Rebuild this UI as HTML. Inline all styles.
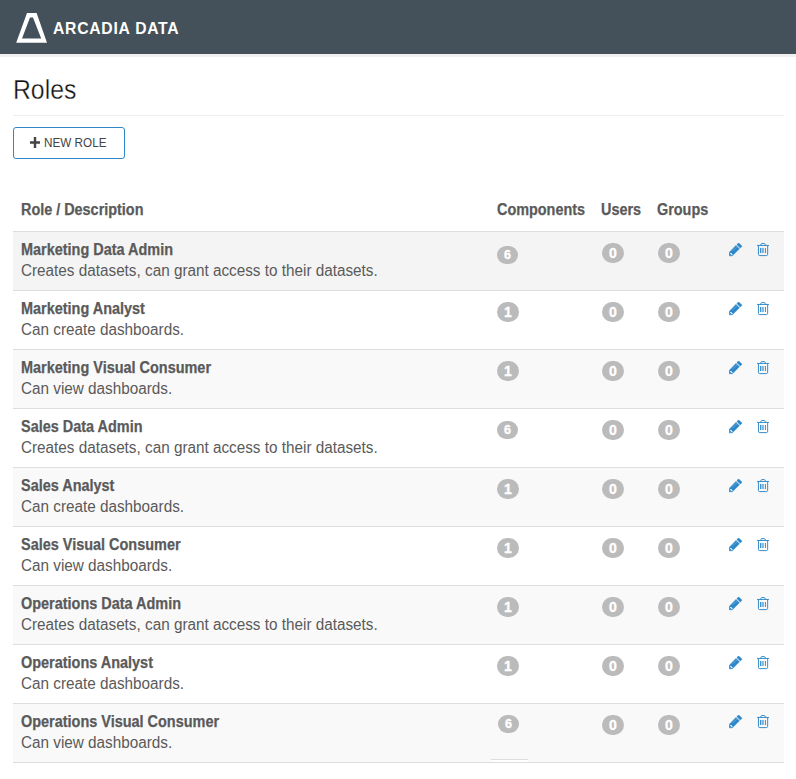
<!DOCTYPE html>
<html><head><meta charset="utf-8">
<style>
*{box-sizing:border-box;}
html,body{margin:0;padding:0;background:#fff;width:796px;height:779px;overflow:hidden;}
body{font-family:"Liberation Sans",sans-serif;color:#5a5a5a;position:relative;}
.hdr{position:absolute;left:0;top:0;width:796px;height:54px;background:#45515a;}
.stripe{position:absolute;left:0;top:54px;width:796px;height:3px;background:#f0f0f0;}
.logo{position:absolute;left:0;top:0;}
.brand{position:absolute;left:53px;top:17px;font-weight:bold;font-size:16.5px;color:#fff;letter-spacing:0.8px;line-height:22px;white-space:nowrap;transform:scaleX(0.95);transform-origin:0 0;}
h1{position:absolute;left:13px;top:72px;margin:0;font-weight:normal;font-size:27.5px;line-height:36px;color:#111;white-space:nowrap;transform:scaleX(0.9);transform-origin:0 0;-webkit-text-stroke:0.35px #fff;}
.hr{position:absolute;left:13px;top:115px;width:771px;height:1px;background:#eee;}
.btn{position:absolute;left:13px;top:127px;width:112px;height:32px;border:1px solid #2f87c7;border-radius:3px;}
.btn .plus{position:absolute;left:16px;top:9px;}
.btn .txt{position:absolute;left:30px;top:7px;font-size:12.8px;line-height:16px;color:#444;white-space:nowrap;transform:scaleX(0.915);transform-origin:0 0;}
.th{position:absolute;top:200px;font-weight:bold;font-size:16px;line-height:20px;color:#5a5a5a;white-space:nowrap;transform:scaleX(0.9);transform-origin:0 0;-webkit-text-stroke:0.25px #5a5a5a;}
.row{position:absolute;left:13px;width:771px;height:59px;border-top:1px solid #ddd;}
.row.odd{background:#f9f9f9;}
.row.hov{background:#f4f4f4;}
.bottom{position:absolute;left:13px;top:762px;width:771px;height:1px;background:#ddd;}
.t{position:absolute;left:8px;top:8px;font-weight:bold;font-size:16px;line-height:20px;color:#5a5a5a;white-space:nowrap;transform:scaleX(0.903);transform-origin:0 0;-webkit-text-stroke:0.25px #5a5a5a;}
.d{position:absolute;left:8px;top:29px;font-size:16px;line-height:20px;color:#5a5a5a;white-space:nowrap;transform:scaleX(0.955);transform-origin:0 0;}
.b{position:absolute;background:#bbb;color:#fff;font-weight:bold;text-align:center;border-radius:10px;-webkit-text-stroke:0.35px #fff;}
.bc{left:484px;top:14px;width:21px;height:18px;font-size:12.5px;line-height:18px;}
.bu{left:589px;top:11px;width:22px;height:20px;font-size:14px;line-height:20px;}
.bg{left:645px;top:11px;width:22px;height:20px;font-size:14px;line-height:20px;}
.ic{position:absolute;top:11px;}
.mark{position:absolute;left:478px;top:55px;width:37px;height:1px;background:#ddd;box-shadow:0 1px 0 #fff,0 2px 0 #fff;}
.pen{left:716px;}
.trash{left:744px;}
</style></head><body>
<div class="hdr">
  <svg class="logo" width="60" height="54" viewBox="0 0 60 54">
    <path fill="#fff" fill-rule="evenodd" d="M27 13 L36.6 13 L47 42.8 L16.2 42.8 Z M30 17.6 L33 17.6 L41.2 38.6 L22 38.6 Z"/>
  </svg>
  <div class="brand">ARCADIA DATA</div>
</div>
<div class="stripe"></div>
<h1>Roles</h1>
<div class="hr"></div>
<div class="btn">
  <svg class="plus" width="10" height="11" viewBox="0 0 10 11"><path fill="#444" d="M3.8 0h2.4v4.3h3.8v2.4H6.2V11H3.8V6.7H0V4.3h3.8z"/></svg>
  <span class="txt">NEW ROLE</span>
</div>
<div class="th" style="left:21px">Role / Description</div>
<div class="th" style="left:497px">Components</div>
<div class="th" style="left:601px">Users</div>
<div class="th" style="left:657px">Groups</div>
<div id="rows">
<div class="row hov" style="top:231px"><div class="t">Marketing Data Admin</div><div class="d">Creates datasets, can grant access to their datasets.</div><div class="b bc" style="top:14px;left:484px">6</div><div class="b bu">0</div><div class="b bg">0</div><svg class="ic pen" width="14" height="14" viewBox="0 0 14 14"><g fill="#2b87c9" stroke="#2b87c9" stroke-width="0.5" stroke-linejoin="round"><path d="M7.85 1.55 L9.6 -0.1 L13 3.2 L11.25 4.95 Z"/><path d="M7.0 2.4 L10.4 5.8 L3.4 12.8 L0.2 12.8 L0.2 9.4 Z"/></g><path fill="#fff" d="M0.9 10.4 L1.9 9.7 L3.8 11.7 L3.0 12.3 Z"/><path stroke="#fff" stroke-opacity="0.3" stroke-width="0.7" d="M3.3 8.0 L8.2 3.9"/></svg><svg class="ic trash" width="14" height="14" viewBox="0 0 14 14"><g fill="none" stroke="#2b87c9" stroke-width="0.95" stroke-linecap="round"><path d="M3.6 2.4 L4.3 0.8 Q4.5 0.45 4.9 0.45 H7.2 Q7.6 0.45 7.8 0.8 L8.5 2.4"/><path d="M0.45 2.45 H11.55"/><path d="M1.45 2.6 V11.3 Q1.45 12.6 2.75 12.6 H9.35 Q10.65 12.6 10.65 11.3 V2.6"/></g><path fill="#2b87c9" d="M3.1 4.9h0.9v5.1H3.1z M7.9 4.9h0.95v5.1H7.9z"/><path fill="#2b87c9" fill-opacity="0.6" d="M4.4 4.9h2.5v5.1H4.4z"/></svg></div>
<div class="row" style="top:290px"><div class="t">Marketing Analyst</div><div class="d">Can create dashboards.</div><div class="b bu" style="left:484px">1</div><div class="b bu">0</div><div class="b bg">0</div><svg class="ic pen" width="14" height="14" viewBox="0 0 14 14"><g fill="#2b87c9" stroke="#2b87c9" stroke-width="0.5" stroke-linejoin="round"><path d="M7.85 1.55 L9.6 -0.1 L13 3.2 L11.25 4.95 Z"/><path d="M7.0 2.4 L10.4 5.8 L3.4 12.8 L0.2 12.8 L0.2 9.4 Z"/></g><path fill="#fff" d="M0.9 10.4 L1.9 9.7 L3.8 11.7 L3.0 12.3 Z"/><path stroke="#fff" stroke-opacity="0.3" stroke-width="0.7" d="M3.3 8.0 L8.2 3.9"/></svg><svg class="ic trash" width="14" height="14" viewBox="0 0 14 14"><g fill="none" stroke="#2b87c9" stroke-width="0.95" stroke-linecap="round"><path d="M3.6 2.4 L4.3 0.8 Q4.5 0.45 4.9 0.45 H7.2 Q7.6 0.45 7.8 0.8 L8.5 2.4"/><path d="M0.45 2.45 H11.55"/><path d="M1.45 2.6 V11.3 Q1.45 12.6 2.75 12.6 H9.35 Q10.65 12.6 10.65 11.3 V2.6"/></g><path fill="#2b87c9" d="M3.1 4.9h0.9v5.1H3.1z M7.9 4.9h0.95v5.1H7.9z"/><path fill="#2b87c9" fill-opacity="0.6" d="M4.4 4.9h2.5v5.1H4.4z"/></svg></div>
<div class="row odd" style="top:349px"><div class="t">Marketing Visual Consumer</div><div class="d">Can view dashboards.</div><div class="b bu" style="left:484px">1</div><div class="b bu">0</div><div class="b bg">0</div><svg class="ic pen" width="14" height="14" viewBox="0 0 14 14"><g fill="#2b87c9" stroke="#2b87c9" stroke-width="0.5" stroke-linejoin="round"><path d="M7.85 1.55 L9.6 -0.1 L13 3.2 L11.25 4.95 Z"/><path d="M7.0 2.4 L10.4 5.8 L3.4 12.8 L0.2 12.8 L0.2 9.4 Z"/></g><path fill="#fff" d="M0.9 10.4 L1.9 9.7 L3.8 11.7 L3.0 12.3 Z"/><path stroke="#fff" stroke-opacity="0.3" stroke-width="0.7" d="M3.3 8.0 L8.2 3.9"/></svg><svg class="ic trash" width="14" height="14" viewBox="0 0 14 14"><g fill="none" stroke="#2b87c9" stroke-width="0.95" stroke-linecap="round"><path d="M3.6 2.4 L4.3 0.8 Q4.5 0.45 4.9 0.45 H7.2 Q7.6 0.45 7.8 0.8 L8.5 2.4"/><path d="M0.45 2.45 H11.55"/><path d="M1.45 2.6 V11.3 Q1.45 12.6 2.75 12.6 H9.35 Q10.65 12.6 10.65 11.3 V2.6"/></g><path fill="#2b87c9" d="M3.1 4.9h0.9v5.1H3.1z M7.9 4.9h0.95v5.1H7.9z"/><path fill="#2b87c9" fill-opacity="0.6" d="M4.4 4.9h2.5v5.1H4.4z"/></svg></div>
<div class="row" style="top:408px"><div class="t">Sales Data Admin</div><div class="d">Creates datasets, can grant access to their datasets.</div><div class="b bc" style="top:12px;left:484px">6</div><div class="b bu">0</div><div class="b bg">0</div><svg class="ic pen" width="14" height="14" viewBox="0 0 14 14"><g fill="#2b87c9" stroke="#2b87c9" stroke-width="0.5" stroke-linejoin="round"><path d="M7.85 1.55 L9.6 -0.1 L13 3.2 L11.25 4.95 Z"/><path d="M7.0 2.4 L10.4 5.8 L3.4 12.8 L0.2 12.8 L0.2 9.4 Z"/></g><path fill="#fff" d="M0.9 10.4 L1.9 9.7 L3.8 11.7 L3.0 12.3 Z"/><path stroke="#fff" stroke-opacity="0.3" stroke-width="0.7" d="M3.3 8.0 L8.2 3.9"/></svg><svg class="ic trash" width="14" height="14" viewBox="0 0 14 14"><g fill="none" stroke="#2b87c9" stroke-width="0.95" stroke-linecap="round"><path d="M3.6 2.4 L4.3 0.8 Q4.5 0.45 4.9 0.45 H7.2 Q7.6 0.45 7.8 0.8 L8.5 2.4"/><path d="M0.45 2.45 H11.55"/><path d="M1.45 2.6 V11.3 Q1.45 12.6 2.75 12.6 H9.35 Q10.65 12.6 10.65 11.3 V2.6"/></g><path fill="#2b87c9" d="M3.1 4.9h0.9v5.1H3.1z M7.9 4.9h0.95v5.1H7.9z"/><path fill="#2b87c9" fill-opacity="0.6" d="M4.4 4.9h2.5v5.1H4.4z"/></svg></div>
<div class="row odd" style="top:467px"><div class="t">Sales Analyst</div><div class="d">Can create dashboards.</div><div class="b bu" style="left:484px">1</div><div class="b bu">0</div><div class="b bg">0</div><svg class="ic pen" width="14" height="14" viewBox="0 0 14 14"><g fill="#2b87c9" stroke="#2b87c9" stroke-width="0.5" stroke-linejoin="round"><path d="M7.85 1.55 L9.6 -0.1 L13 3.2 L11.25 4.95 Z"/><path d="M7.0 2.4 L10.4 5.8 L3.4 12.8 L0.2 12.8 L0.2 9.4 Z"/></g><path fill="#fff" d="M0.9 10.4 L1.9 9.7 L3.8 11.7 L3.0 12.3 Z"/><path stroke="#fff" stroke-opacity="0.3" stroke-width="0.7" d="M3.3 8.0 L8.2 3.9"/></svg><svg class="ic trash" width="14" height="14" viewBox="0 0 14 14"><g fill="none" stroke="#2b87c9" stroke-width="0.95" stroke-linecap="round"><path d="M3.6 2.4 L4.3 0.8 Q4.5 0.45 4.9 0.45 H7.2 Q7.6 0.45 7.8 0.8 L8.5 2.4"/><path d="M0.45 2.45 H11.55"/><path d="M1.45 2.6 V11.3 Q1.45 12.6 2.75 12.6 H9.35 Q10.65 12.6 10.65 11.3 V2.6"/></g><path fill="#2b87c9" d="M3.1 4.9h0.9v5.1H3.1z M7.9 4.9h0.95v5.1H7.9z"/><path fill="#2b87c9" fill-opacity="0.6" d="M4.4 4.9h2.5v5.1H4.4z"/></svg></div>
<div class="row" style="top:526px"><div class="t">Sales Visual Consumer</div><div class="d">Can view dashboards.</div><div class="b bu" style="left:484px">1</div><div class="b bu">0</div><div class="b bg">0</div><svg class="ic pen" width="14" height="14" viewBox="0 0 14 14"><g fill="#2b87c9" stroke="#2b87c9" stroke-width="0.5" stroke-linejoin="round"><path d="M7.85 1.55 L9.6 -0.1 L13 3.2 L11.25 4.95 Z"/><path d="M7.0 2.4 L10.4 5.8 L3.4 12.8 L0.2 12.8 L0.2 9.4 Z"/></g><path fill="#fff" d="M0.9 10.4 L1.9 9.7 L3.8 11.7 L3.0 12.3 Z"/><path stroke="#fff" stroke-opacity="0.3" stroke-width="0.7" d="M3.3 8.0 L8.2 3.9"/></svg><svg class="ic trash" width="14" height="14" viewBox="0 0 14 14"><g fill="none" stroke="#2b87c9" stroke-width="0.95" stroke-linecap="round"><path d="M3.6 2.4 L4.3 0.8 Q4.5 0.45 4.9 0.45 H7.2 Q7.6 0.45 7.8 0.8 L8.5 2.4"/><path d="M0.45 2.45 H11.55"/><path d="M1.45 2.6 V11.3 Q1.45 12.6 2.75 12.6 H9.35 Q10.65 12.6 10.65 11.3 V2.6"/></g><path fill="#2b87c9" d="M3.1 4.9h0.9v5.1H3.1z M7.9 4.9h0.95v5.1H7.9z"/><path fill="#2b87c9" fill-opacity="0.6" d="M4.4 4.9h2.5v5.1H4.4z"/></svg></div>
<div class="row odd" style="top:585px"><div class="t">Operations Data Admin</div><div class="d">Creates datasets, can grant access to their datasets.</div><div class="b bu" style="left:484px">1</div><div class="b bu">0</div><div class="b bg">0</div><svg class="ic pen" width="14" height="14" viewBox="0 0 14 14"><g fill="#2b87c9" stroke="#2b87c9" stroke-width="0.5" stroke-linejoin="round"><path d="M7.85 1.55 L9.6 -0.1 L13 3.2 L11.25 4.95 Z"/><path d="M7.0 2.4 L10.4 5.8 L3.4 12.8 L0.2 12.8 L0.2 9.4 Z"/></g><path fill="#fff" d="M0.9 10.4 L1.9 9.7 L3.8 11.7 L3.0 12.3 Z"/><path stroke="#fff" stroke-opacity="0.3" stroke-width="0.7" d="M3.3 8.0 L8.2 3.9"/></svg><svg class="ic trash" width="14" height="14" viewBox="0 0 14 14"><g fill="none" stroke="#2b87c9" stroke-width="0.95" stroke-linecap="round"><path d="M3.6 2.4 L4.3 0.8 Q4.5 0.45 4.9 0.45 H7.2 Q7.6 0.45 7.8 0.8 L8.5 2.4"/><path d="M0.45 2.45 H11.55"/><path d="M1.45 2.6 V11.3 Q1.45 12.6 2.75 12.6 H9.35 Q10.65 12.6 10.65 11.3 V2.6"/></g><path fill="#2b87c9" d="M3.1 4.9h0.9v5.1H3.1z M7.9 4.9h0.95v5.1H7.9z"/><path fill="#2b87c9" fill-opacity="0.6" d="M4.4 4.9h2.5v5.1H4.4z"/></svg></div>
<div class="row" style="top:644px"><div class="t">Operations Analyst</div><div class="d">Can create dashboards.</div><div class="b bu" style="left:484px">1</div><div class="b bu">0</div><div class="b bg">0</div><svg class="ic pen" width="14" height="14" viewBox="0 0 14 14"><g fill="#2b87c9" stroke="#2b87c9" stroke-width="0.5" stroke-linejoin="round"><path d="M7.85 1.55 L9.6 -0.1 L13 3.2 L11.25 4.95 Z"/><path d="M7.0 2.4 L10.4 5.8 L3.4 12.8 L0.2 12.8 L0.2 9.4 Z"/></g><path fill="#fff" d="M0.9 10.4 L1.9 9.7 L3.8 11.7 L3.0 12.3 Z"/><path stroke="#fff" stroke-opacity="0.3" stroke-width="0.7" d="M3.3 8.0 L8.2 3.9"/></svg><svg class="ic trash" width="14" height="14" viewBox="0 0 14 14"><g fill="none" stroke="#2b87c9" stroke-width="0.95" stroke-linecap="round"><path d="M3.6 2.4 L4.3 0.8 Q4.5 0.45 4.9 0.45 H7.2 Q7.6 0.45 7.8 0.8 L8.5 2.4"/><path d="M0.45 2.45 H11.55"/><path d="M1.45 2.6 V11.3 Q1.45 12.6 2.75 12.6 H9.35 Q10.65 12.6 10.65 11.3 V2.6"/></g><path fill="#2b87c9" d="M3.1 4.9h0.9v5.1H3.1z M7.9 4.9h0.95v5.1H7.9z"/><path fill="#2b87c9" fill-opacity="0.6" d="M4.4 4.9h2.5v5.1H4.4z"/></svg></div>
<div class="row odd" style="top:703px"><div class="t">Operations Visual Consumer</div><div class="d">Can view dashboards.</div><div class="b bc" style="top:11px;left:485px">6</div><div class="b bu">0</div><div class="b bg">0</div><svg class="ic pen" width="14" height="14" viewBox="0 0 14 14"><g fill="#2b87c9" stroke="#2b87c9" stroke-width="0.5" stroke-linejoin="round"><path d="M7.85 1.55 L9.6 -0.1 L13 3.2 L11.25 4.95 Z"/><path d="M7.0 2.4 L10.4 5.8 L3.4 12.8 L0.2 12.8 L0.2 9.4 Z"/></g><path fill="#fff" d="M0.9 10.4 L1.9 9.7 L3.8 11.7 L3.0 12.3 Z"/><path stroke="#fff" stroke-opacity="0.3" stroke-width="0.7" d="M3.3 8.0 L8.2 3.9"/></svg><svg class="ic trash" width="14" height="14" viewBox="0 0 14 14"><g fill="none" stroke="#2b87c9" stroke-width="0.95" stroke-linecap="round"><path d="M3.6 2.4 L4.3 0.8 Q4.5 0.45 4.9 0.45 H7.2 Q7.6 0.45 7.8 0.8 L8.5 2.4"/><path d="M0.45 2.45 H11.55"/><path d="M1.45 2.6 V11.3 Q1.45 12.6 2.75 12.6 H9.35 Q10.65 12.6 10.65 11.3 V2.6"/></g><path fill="#2b87c9" d="M3.1 4.9h0.9v5.1H3.1z M7.9 4.9h0.95v5.1H7.9z"/><path fill="#2b87c9" fill-opacity="0.6" d="M4.4 4.9h2.5v5.1H4.4z"/></svg><div class="mark"></div></div>
</div>
<div class="bottom"></div>
</body></html>
